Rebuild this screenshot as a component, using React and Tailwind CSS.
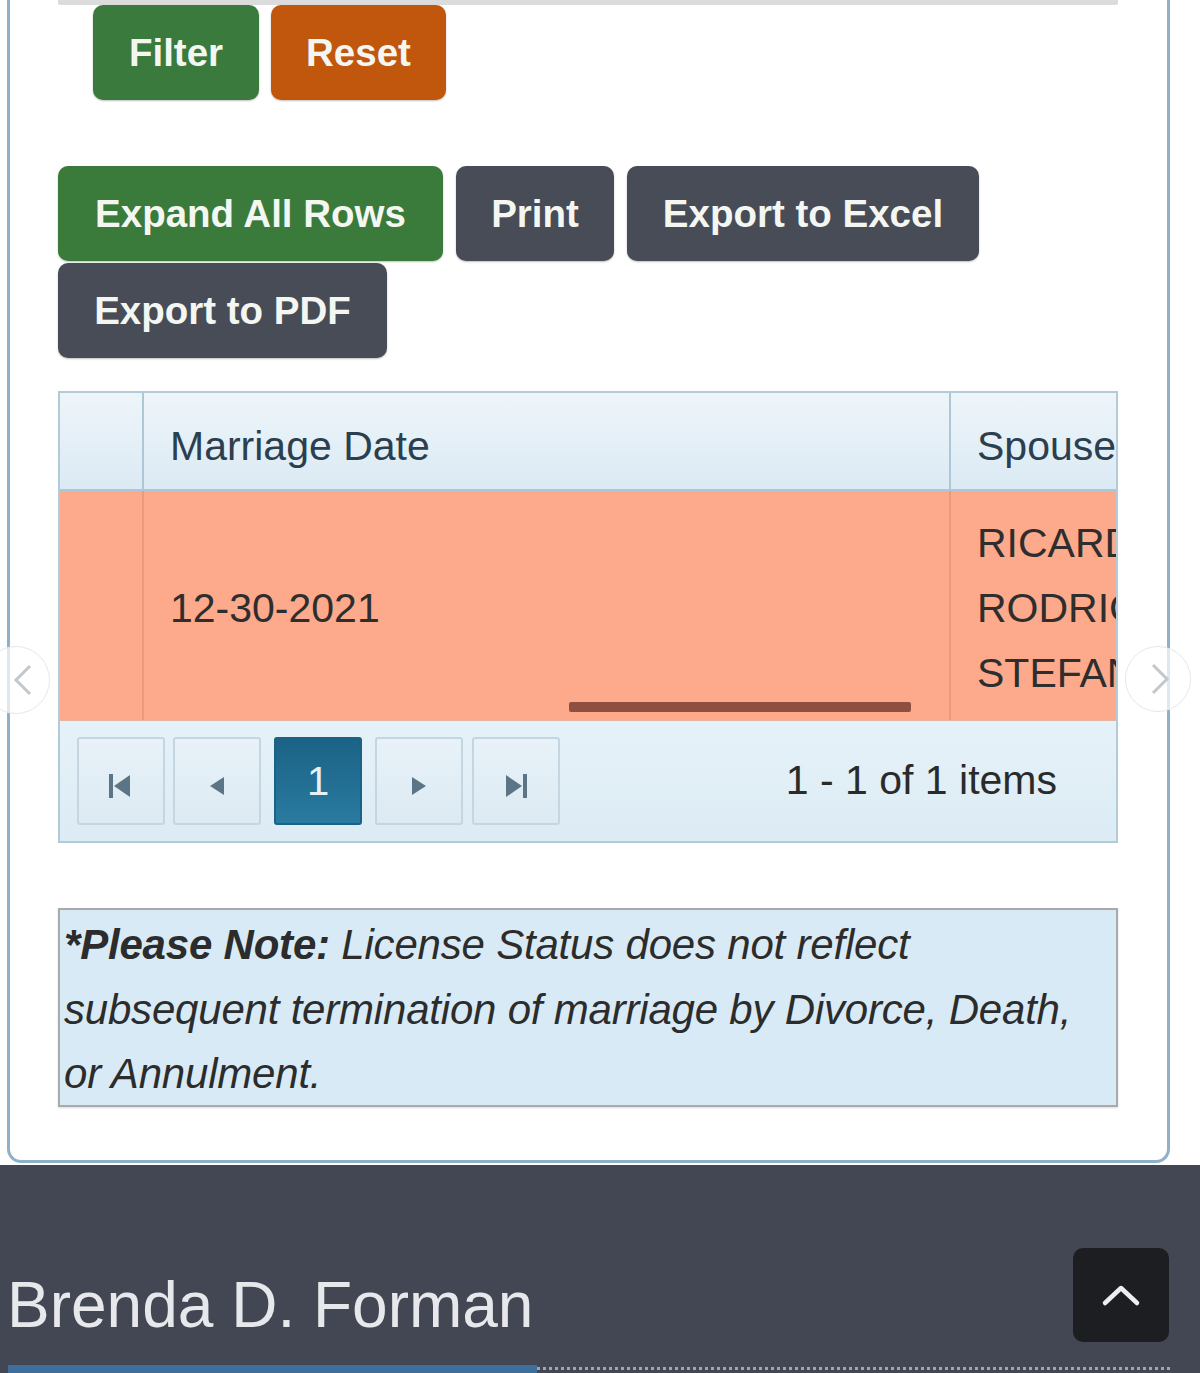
import React from "react";

const Btn = ({ className = "", children }) => (
  <div
    className={`h-[95px] rounded-[10px] flex items-center justify-center font-bold text-[38.5px] text-[#f3f6f1] shadow-[0_1px_2px_rgba(0,0,0,0.25)] ${className}`}
  >
    {children}
  </div>
);

const PagerBtn = ({ children, active = false, className = "" }) => (
  <div
    className={`w-[88px] h-[88px] flex items-center justify-center border-2 rounded-[3px] ${
      active
        ? "bg-gradient-to-b from-[#1b6386] to-[#2a7aa0] border-[#1b6386] text-[#e6f0f5] text-[40px]"
        : "bg-gradient-to-b from-[#e8f2f8] to-[#dceaf3] border-[#c4d6e1]"
    } ${className}`}
  >
    {children}
  </div>
);

const ic = "#5b7586";

export default function App() {
  return (
    <div
      className="relative w-[1200px] h-[1373px] overflow-hidden bg-white"
      style={{ fontFamily: '"Liberation Sans", Arial, Helvetica, sans-serif' }}
    >
      {/* Card */}
      <div className="ml-[7px] w-[1163px] h-[1163px] border-x-[3px] border-b-[3px] border-[#8fb1c8] rounded-b-[14px] pl-[48px]">
        <div className="w-[1060px] h-[5px] bg-[#dcdcdc] rounded-b-[2px]" />

        <div className="ml-[35px] flex gap-[12px]">
          <Btn className="w-[166px] bg-[#3b7a3d]">Filter</Btn>
          <Btn className="w-[175px] bg-[#c1560d]">Reset</Btn>
        </div>

        <div className="mt-[66px] w-[1060px] flex flex-wrap gap-x-[13px] gap-y-[2px]">
          <Btn className="w-[385px] bg-[#3a7a3b]">Expand All Rows</Btn>
          <Btn className="w-[158px] bg-[#474c57]">Print</Btn>
          <Btn className="w-[352px] bg-[#474c57]">Export to Excel</Btn>
          <Btn className="w-[329px] bg-[#474c57]">Export to PDF</Btn>
        </div>

        {/* Table */}
        <div className="relative mt-[33px] w-[1060px] h-[452px] border-2 border-[#b2cbd9] overflow-hidden flex flex-col">
          {/* header */}
          <div className="h-[98px] flex shrink-0 bg-gradient-to-b from-[#eef5fa] to-[#dbeaf4] border-b-2 border-[#adc7d6] text-[41px] text-[#2b3f4f]">
            <div className="w-[84px] shrink-0 border-r-2 border-[#adc7d6]" />
            <div className="w-[807px] shrink-0 border-r-2 border-[#adc7d6] flex items-center pl-[26px] pt-[12px]">
              Marriage Date
            </div>
            <div className="w-[400px] shrink-0 flex items-center pl-[26px] pt-[12px]">Spouse Names</div>
          </div>
          {/* row */}
          <div className="h-[229px] flex shrink-0 bg-[#fda98b] text-[41px] text-[#2e2e2e]">
            <div className="w-[84px] shrink-0 border-r-2 border-[#e99a7f]" />
            <div className="w-[807px] shrink-0 border-r-2 border-[#e99a7f] flex items-center pl-[26px] pt-[6px]">
              12-30-2021
            </div>
            <div className="w-[400px] shrink-0 flex flex-col justify-center pl-[26px] pt-[6px] leading-[65px] whitespace-nowrap">
              <span>RICARDO</span>
              <span>RODRIGUEZ</span>
              <span>STEFANIE</span>
            </div>
          </div>
          {/* pager */}
          <div className="flex-1 bg-gradient-to-b from-[#e6f2f9] to-[#dcebf4] flex items-start pt-[16px] pl-[17px] pr-[59px] border-t border-[#e7b4a2]">
            <div className="flex">
              <PagerBtn>
                <svg width="30" height="30" viewBox="0 0 30 30" className="mt-[10px]">
                  <rect x="3" y="3" width="4" height="24" fill={ic} />
                  <polygon points="24,4 24,26 8,15" fill={ic} />
                </svg>
              </PagerBtn>
              <PagerBtn className="ml-[8px]">
                <svg width="26" height="30" viewBox="0 0 26 30" className="mt-[10px]">
                  <polygon points="20,6 20,24 6,15" fill={ic} />
                </svg>
              </PagerBtn>
              <PagerBtn active className="ml-[13px]">1</PagerBtn>
              <PagerBtn className="ml-[13px]">
                <svg width="26" height="30" viewBox="0 0 26 30" className="mt-[10px]">
                  <polygon points="6,6 6,24 20,15" fill={ic} />
                </svg>
              </PagerBtn>
              <PagerBtn className="ml-[9px]">
                <svg width="30" height="30" viewBox="0 0 30 30" className="mt-[10px]">
                  <polygon points="5,4 5,26 21,15" fill={ic} />
                  <rect x="22" y="3" width="4" height="24" fill={ic} />
                </svg>
              </PagerBtn>
            </div>
            <div className="ml-auto h-[88px] flex items-center text-[41px] text-[#2a2a2a]">
              1 - 1 of 1 items
            </div>
          </div>
          {/* horizontal scroll thumb */}
          <div className="absolute left-[509px] top-[309px] w-[342px] h-[10px] rounded-[2px] bg-[#8e4e40]" />
        </div>

        {/* Note */}
        <div className="mt-[65px] w-[1060px] h-[199px] border-2 border-[#a8aaac] bg-[#d8eaf5] pl-[4px] pt-[3px] text-[42px] italic leading-[64.5px] text-[#2c2c2c] tracking-[-0.2px] shadow-[0_1px_2px_rgba(0,0,0,0.15)]">
          <span className="font-bold">*Please Note:</span> License Status does not reflect
          <br />
          subsequent termination of marriage by Divorce, Death,
          <br />
          or Annulment.
        </div>
      </div>

      {/* Footer */}
      <div className="mt-[2px] h-[208px] bg-[#424753] flex flex-col">
        <div className="mt-[83px] flex items-start pl-[7px] pr-[31px]">
          <div className="mt-[20px] text-[64px] leading-[74px] text-[#e7e8eb]">Brenda D. Forman</div>
          <div className="ml-auto w-[96px] h-[94px] rounded-[10px] bg-[#1d1e21] flex items-center justify-center">
            <svg width="40" height="24" viewBox="0 0 40 24">
              <polyline
                points="4,20 20,5 36,20"
                fill="none"
                stroke="#eeeeee"
                strokeWidth="4.5"
                strokeLinecap="round"
                strokeLinejoin="round"
              />
            </svg>
          </div>
        </div>
        <div className="mt-[23px] flex items-start pl-[8px] pr-[30px]">
          <div className="w-[529px] h-[8px] bg-[#3e6e9b]" />
          <div className="flex-1 mt-[2px] border-t-[3px] border-dotted border-[#9ea6b3]" />
        </div>
      </div>

      {/* carousel arrows */}
      <div className="absolute left-[-18px] top-[646px] w-[68px] h-[68px] rounded-full bg-white/70 border border-[#e4e8ec] flex items-center justify-center">
        <svg width="30" height="40" viewBox="0 0 30 40" className="ml-[14px]">
          <polyline points="22,6 8,20 22,34" fill="none" stroke="#c3c8cd" strokeWidth="3" />
        </svg>
      </div>
      <div className="absolute left-[1125px] top-[646px] w-[66px] h-[66px] rounded-full bg-white/70 border border-[#e4e8ec] flex items-center justify-center">
        <svg width="30" height="40" viewBox="0 0 30 40">
          <polyline points="10,6 24,20 10,34" fill="none" stroke="#c3c8cd" strokeWidth="3" />
        </svg>
      </div>
    </div>
  );
}
